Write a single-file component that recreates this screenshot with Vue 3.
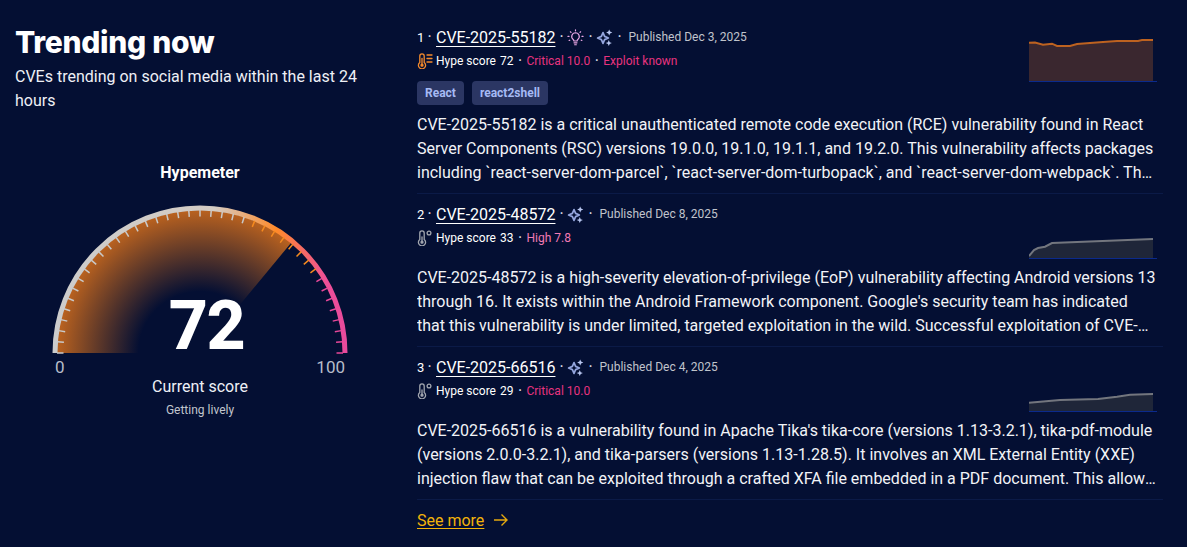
<script setup>
const cx = 200, cy = 353
const ticks = Array.from({ length: 41 }, (_, i) => {
  const a = Math.PI * (1 - i / 40)
  const c = Math.cos(a), s = Math.sin(a)
  return {
    x1: +(cx + 143 * c).toFixed(2), y1: +(cy - 143 * s).toFixed(2),
    x2: +(cx + 136.5 * c).toFixed(2), y2: +(cy - 136.5 * s).toFixed(2),
    color: i <= 24 ? '#c9c9c9' : i <= 32 ? '#f58a1f' : '#e8489a'
  }
})
const tip = { x: cx + 143 * Math.cos(Math.PI * 0.28), y: cy - 143 * Math.sin(Math.PI * 0.28) }
const wedge = `M${cx} ${cy}L${cx - 143} ${cy}A143 143 0 0 1 ${tip.x.toFixed(2)} ${tip.y.toFixed(2)}Z`

function spark(pts) {
  const line = pts.map((p, i) => (i ? 'L' : 'M') + p[0] + ' ' + p[1]).join('')
  return { line, area: line + `L${pts[pts.length - 1][0]} 50L0 50Z` }
}

const items = [
  {
    rank: 1, id: 'CVE-2025-55182', bulb: true, date: 'Dec 3, 2025', hot: true, score: 72,
    sev: 'Critical 10.0', sevClass: 'crit', exploit: true, tags: ['React', 'react2shell'],
    spark: spark([[0,11.7],[6,11.5],[14,13.7],[23,12.7],[28,15],[41,15],[48,13],[74,11],[88,10],[109,10],[113,9],[124,9]]),
    text: 'CVE-2025-55182 is a critical unauthenticated remote code execution (RCE) vulnerability found in React Server Components (RSC) versions 19.0.0, 19.1.0, 19.1.1, and 19.2.0. This vulnerability affects packages including `react-server-dom-parcel`, `react-server-dom-turbopack`, and `react-server-dom-webpack`. The flaw allows remote attackers to execute arbitrary code on the server through crafted requests.'
  },
  {
    rank: 2, id: 'CVE-2025-48572', bulb: false, date: 'Dec 8, 2025', hot: false, score: 33,
    sev: 'High 7.8', sevClass: 'high', exploit: false, tags: [],
    spark: spark([[0,48],[5,42],[9,40],[16,38.7],[23,35],[124,31]]),
    text: "CVE-2025-48572 is a high-severity elevation-of-privilege (EoP) vulnerability affecting Android versions 13 through 16. It exists within the Android Framework component. Google's security team has indicated that this vulnerability is under limited, targeted exploitation in the wild. Successful exploitation of CVE-2025-48572 could allow a local attacker to gain elevated privileges on the device."
  },
  {
    rank: 3, id: 'CVE-2025-66516', bulb: false, date: 'Dec 4, 2025', hot: false, score: 29,
    sev: 'Critical 10.0', sevClass: 'crit', exploit: false, tags: [],
    spark: spark([[0,41.7],[31,39],[69,38],[88,35.7],[101,33.7],[124,33]]),
    text: "CVE-2025-66516 is a vulnerability found in Apache Tika's tika-core (versions 1.13-3.2.1), tika-pdf-module (versions 2.0.0-3.2.1), and tika-parsers (versions 1.13-1.28.5). It involves an XML External Entity (XXE) injection flaw that can be exploited through a crafted XFA file embedded in a PDF document. This allows attackers to read sensitive data from the server or trigger outbound requests."
  }
]
</script>

<template>
  <div class="page">
    <section class="left">
      <h1 class="title">Trending now</h1>
      <p class="sub">CVEs trending on social media within the last 24 hours</p>
      <h2 class="meter-title">Hypemeter</h2>
      <svg class="gauge" width="370" height="172" viewBox="15 190 370 172">
        <defs>
          <radialGradient id="fillGrad" gradientUnits="userSpaceOnUse" cx="200" cy="353" r="143">
            <stop offset="0.43" stop-color="#040f33" />
            <stop offset="1" stop-color="#ba621f" />
          </radialGradient>
          <linearGradient id="arcGrad" gradientUnits="userSpaceOnUse" x1="53" y1="0" x2="347" y2="0">
            <stop offset="0" stop-color="#cccccc" />
            <stop offset="0.55" stop-color="#d4ccc4" />
            <stop offset="0.76" stop-color="#ff8a2a" />
            <stop offset="0.93" stop-color="#ee4f98" />
            <stop offset="1" stop-color="#e84a9c" />
          </linearGradient>
        </defs>
        <path :d="wedge" fill="url(#fillGrad)" />
        <path d="M55 353A145 145 0 0 1 345 353" fill="none" stroke="url(#arcGrad)" stroke-width="5" />
        <line v-for="(t, i) in ticks" :key="i" :x1="t.x1" :y1="t.y1" :x2="t.x2" :y2="t.y2" :stroke="t.color" stroke-width="1.5" />
        <text class="score" x="206.5" y="348.5" text-anchor="middle">72</text>
      </svg>
      <div class="scale"><span>0</span><span>100</span></div>
      <div class="current">Current score</div>
      <div class="lively">Getting lively</div>
    </section>

    <section class="right">
      <article v-for="it in items" :key="it.id" class="item">
        <div class="head">
          <div class="meta">
            <div class="row first">
              <span class="rank">{{ it.rank }}</span>
              <span class="dot">·</span>
              <a class="cve">{{ it.id }}</a>
              <span class="dot">·</span>
              <template v-if="it.bulb">
                <svg class="ic" width="17" height="17" viewBox="0 0 16 16" fill="none" stroke="#eaa8e6" stroke-width="1.1" stroke-linecap="round" stroke-linejoin="round">
                  <path d="M8 3.5a3.6 3.6 0 0 0-2.2 6.4c.5.4.7.9.7 1.4h3c0-.5.2-1 .7-1.4A3.6 3.6 0 0 0 8 3.5z" />
                  <path d="M6.6 13h2.8M7.2 14.8h1.6" />
                  <path d="M8 .8v.9M3.2 2.6l.6.6M12.8 2.6l-.6.6M.9 7h1M14.1 7h1M2 10.8l.6-.3M14 10.8l-.6-.3" />
                </svg>
                <span class="dot">·</span>
              </template>
              <svg class="ic" width="17" height="17" viewBox="0 0 17 17">
                <path d="M7 3.6 8.6 7.4 12.4 9 8.6 10.6 7 14.4 5.4 10.6 1.6 9 5.4 7.4z" fill="none" stroke="#94a5dd" stroke-width="1.7" stroke-linejoin="round" />
                <path d="M13.2 .4l.9 2.2 2.2.9-2.2.9-.9 2.2-.9-2.2-2.2-.9 2.2-.9z" fill="#b8c6f0" />
                <path d="M12.8 11l.9 2.2 2.2.9-2.2.9-.9 2-.9-2-2.2-.9 2.2-.9z" fill="#b8c6f0" />
              </svg>
              <span class="dot">·</span>
              <span class="pub">Published {{ it.date }}</span>
            </div>
            <div class="row second">
              <svg v-if="it.hot" class="ic" width="16" height="16" viewBox="0 0 16 16" fill="none" stroke="#f58a2c" stroke-width="1.3" stroke-linecap="round">
                <path d="M7.2 9.4V3a2.2 2.2 0 0 0-4.4 0v6.4a3.6 3.6 0 1 0 4.4 0z" />
                <path d="M5 5.5v6" />
                <circle cx="5" cy="12.2" r="1" fill="#f58a2c" />
                <path d="M10 2h5M10 5.5h5M10 9h5" />
              </svg>
              <svg v-else class="ic" width="16" height="16" viewBox="0 0 16 16" fill="none" stroke="#a2a6af" stroke-width="1.3" stroke-linecap="round">
                <path d="M7.2 9.4V3a2.2 2.2 0 0 0-4.4 0v6.4a3.6 3.6 0 1 0 4.4 0z" />
                <path d="M5 7v4.5" />
                <circle cx="5" cy="12.2" r="1" fill="#a2a6af" />
                <circle cx="12" cy="3" r="1.9" />
              </svg>
              <span class="hype">Hype score</span>
              <span class="hype val">{{ it.score }}</span>
              <span class="dot">·</span>
              <span :class="it.sevClass">{{ it.sev }}</span>
              <template v-if="it.exploit">
                <span class="dot">·</span>
                <span class="crit">Exploit known</span>
              </template>
            </div>
            <div v-if="it.tags.length" class="tags">
              <span v-for="t in it.tags" :key="t" class="tag">{{ t }}</span>
            </div>
          </div>
          <svg class="spark" width="128" height="51" viewBox="0 0 128 51">
            <path :d="it.spark.area" :fill="it.hot ? '#3a272f' : '#1f2639'" />
            <path :d="it.spark.line" fill="none" :stroke="it.hot ? '#bd6220' : '#73767e'" stroke-width="2" />
            <line x1="0" y1="50.5" x2="128" y2="50.5" stroke="#0b2a8c" stroke-width="1" />
          </svg>
        </div>
        <p class="desc">{{ it.text }}</p>
      </article>
      <div class="more">
        <a class="more-link">See more</a>
        <svg width="16" height="14" viewBox="0 0 16 14" fill="none" stroke="#e5a90f" stroke-width="1.4">
          <path d="M1 7h13M8.5 1.5 14 7l-5.5 5.5" />
        </svg>
      </div>
    </section>
  </div>
</template>

<style>
html, body { margin: 0; background: #040f33; }
</style>

<style scoped>
.page {
  display: flex;
  width: 1187px;
  height: 547px;
  overflow: hidden;
  background: #040f33;
  color: #fff;
  font-family: Roboto, "Liberation Sans", sans-serif;
  box-sizing: border-box;
}
.left {
  width: 370px;
  margin-left: 15px;
  flex: none;
  display: flex;
  flex-direction: column;
}
.title {
  margin: 22px 0 0;
  font-family: Inter, Roboto, sans-serif;
  font-size: 30px;
  line-height: 40px;
  font-weight: 800;
  letter-spacing: -0.3px;
}
.sub {
  margin: 3px 0 0;
  font-size: 16px;
  line-height: 24px;
  color: #eef0f6;
}
.meter-title {
  margin: 50px 0 0;
  font-size: 16px;
  line-height: 20px;
  font-weight: 700;
  text-align: center;
}
.gauge { display: block; margin-top: 7px; }
.score {
  font-family: Roboto, Inter, sans-serif;
  font-size: 68px;
  font-weight: 800;
  letter-spacing: -1.5px;
  fill: #fff;
}
.scale {
  display: flex;
  justify-content: space-between;
  padding: 0 40px;
  margin-top: -5px;
  font-size: 17px;
  line-height: 20px;
  color: #b7bdc9;
}
.current {
  margin-top: 0;
  text-align: center;
  font-size: 16px;
  line-height: 20px;
  color: #eef0f6;
}
.lively {
  margin-top: 5px;
  text-align: center;
  font-size: 12px;
  line-height: 16px;
  color: #c2c6ce;
}
.right {
  margin-left: 32px;
  width: 746px;
  padding-top: 17px;
  flex: none;
}
.item {
  padding-bottom: 8px;
  border-bottom: 1px solid #0b1a47;
}
.head { display: flex; align-items: flex-start; }
.meta { flex: 1; min-width: 0; padding: 8px 0 8px; }
.spark { flex: none; margin: 14px 6px 7px 0; display: block; }
.row {
  display: flex;
  align-items: center;
  height: 24px;
  font-size: 12px;
  white-space: nowrap;
}
.rank { font-size: 13px; width: 6px; }
.dot { width: 14px; text-align: center; color: #d6d9e2; font-size: 12px; font-weight: 700; flex: none; }
.first .dot { width: 12px; }
.first .rank + .dot { width: 13px; }
.cve {
  font-size: 16px;
  color: #fff;
  text-decoration: underline;
  text-underline-offset: 3px;
}
.pub { color: #c0c4cc; margin-left: 3px; }
.ic { flex: none; display: block; }
.second .ic { margin-right: 3px; }
.hype { color: #fff; }
.val { margin-left: 4px; }
.second .dot { width: 13px; }
.second .dot:nth-last-of-type(1) { width: 12px; }
.crit { color: #e8337f; }
.high { color: #f27ab4; }
.tags { display: flex; gap: 8px; margin-top: 8px; }
.tag {
  height: 24px;
  line-height: 24px;
  padding: 0 8px;
  border-radius: 4px;
  background: #2b3663;
  color: #a6baf4;
  font-size: 12px;
  font-weight: 700;
}
.desc {
  margin: 0 4px 0 0;
  font-size: 16px;
  line-height: 24px;
  color: #f2f3f7;
  display: -webkit-box;
  -webkit-box-orient: vertical;
  -webkit-line-clamp: 3;
  overflow: hidden;
}
.more {
  display: flex;
  align-items: center;
  gap: 9px;
  height: 40px;
}
.more-link {
  font-size: 16px;
  color: #f2b30a;
  text-decoration: underline;
  text-underline-offset: 2px;
}
</style>
